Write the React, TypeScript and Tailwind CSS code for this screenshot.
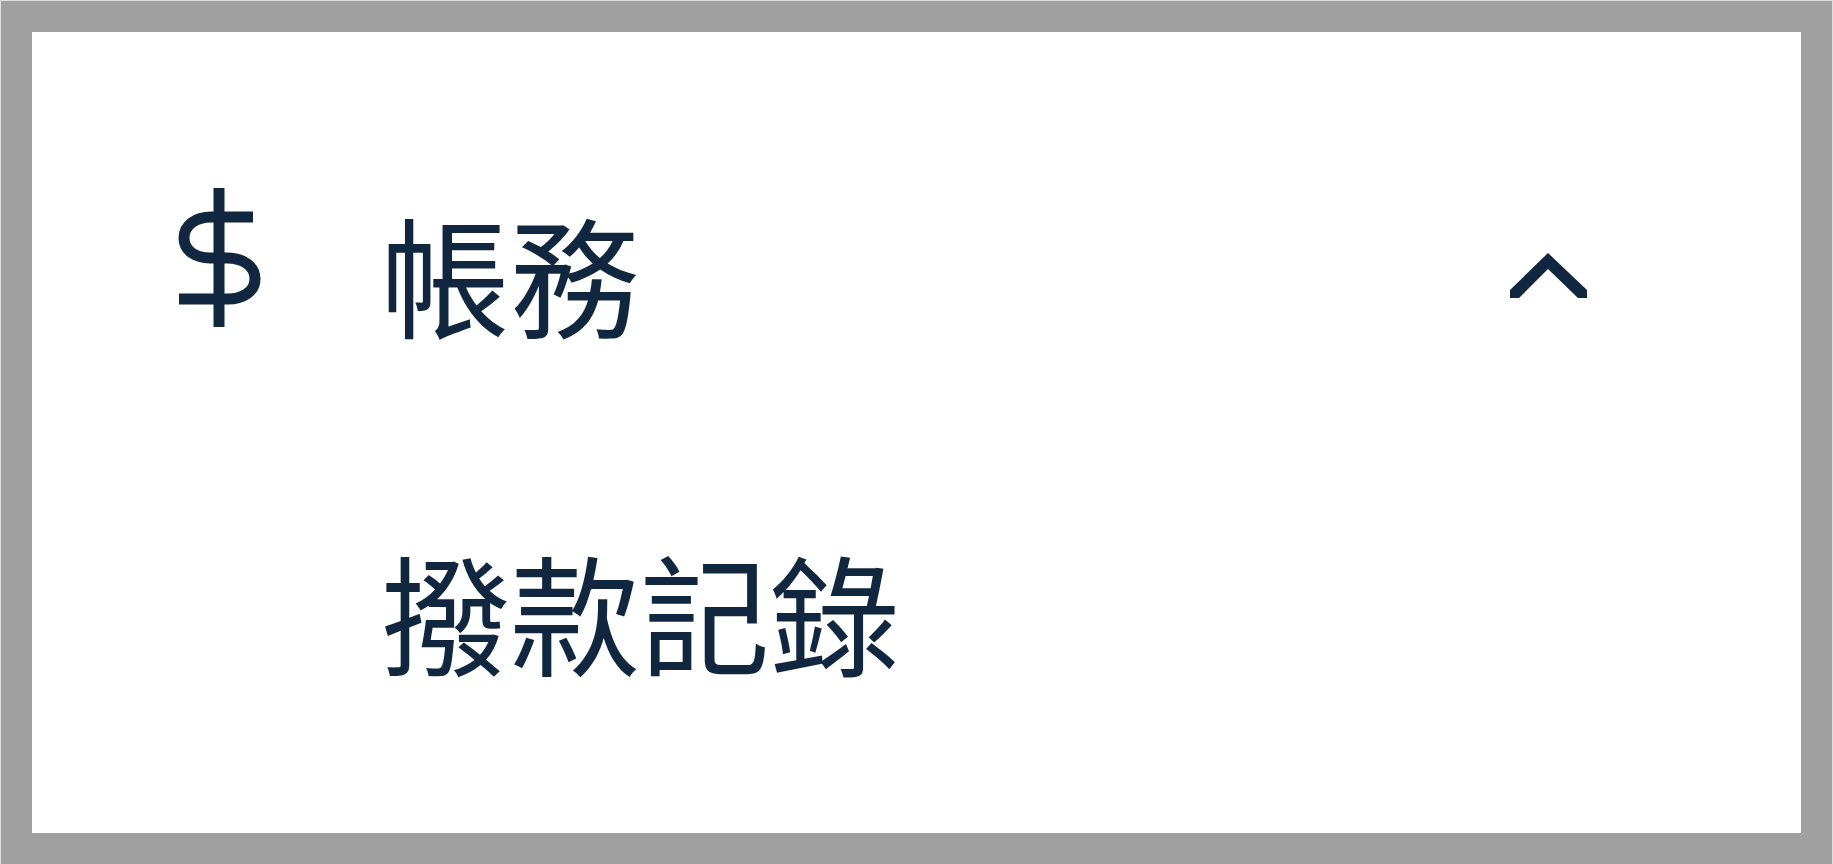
function DollarIcon() {
  return (
    <svg aria-hidden="true" viewBox="0 2 100 144" className="h-36 w-[100px] shrink-0 self-start" fill="none" stroke="currentColor" strokeWidth="11">
      <path d="M50 3V142" />
      <path d="M84 32H42C27 32 15 40 15 53C15 66 27 73 41 73H58C74 73 86 81 86 94C86 107 73 114 59 114H10" />
    </svg>
  );
}

function ChevronUpIcon() {
  return (
    <svg aria-hidden="true" viewBox="0 -10 80 58" className="h-[58px] w-20 shrink-0" fill="currentColor">
      <path d="M40 1L79 38V46H70L40 17L11 46H2V38Z" />
    </svg>
  );
}

export default function App() {
  return (
    <div className="flex min-h-screen border-x border-t border-[#dfdfdf] bg-[#a0a0a0] p-[31px] font-['Noto_Sans_CJK_TC',sans-serif] text-[130px] leading-[168px] text-[#10273f]">
      <nav aria-label="帳務" className="flex-1 bg-white pt-[155px] pr-[213px] pl-[137px]">
        <button type="button" aria-expanded="true" aria-controls="billing-menu" className="flex w-full items-center text-left">
          <DollarIcon />
          <span className="ml-[111px] flex-1">帳務</span>
          <ChevronUpIcon />
        </button>
        <ul id="billing-menu" className="mt-[170px] pl-[211px]">
          <li>
            <a href="#payouts" className="block">撥款記錄</a>
          </li>
        </ul>
      </nav>
    </div>
  );
}
